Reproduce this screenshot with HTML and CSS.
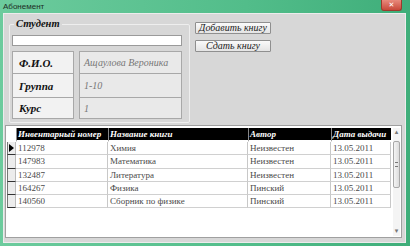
FILE: index.html
```html
<!DOCTYPE html>
<html lang="ru">
<head>
    <meta charset="UTF-8">
    <title>Абонемент</title>
    <link rel="stylesheet" href="styles.css">
</head>
<body>
    <div class="window">
        <div class="titlebar">
            <span class="title">Абонемент</span>
            <span class="close">&#x2715;</span>
        </div>
        <div class="panel">
            <div class="top">
                <fieldset class="group">
                    <legend>Студент</legend>
                    <div class="search"></div>
                    <div class="info">
                        <div class="key">Ф.И.О.</div>
                        <div class="val">Ащаулова Вероника</div>
                        <div class="key">Группа</div>
                        <div class="val">1-10</div>
                        <div class="key">Курс</div>
                        <div class="val">1</div>
                    </div>
                </fieldset>
                <div class="actions">
                    <button class="btn">Добавить книгу</button>
                    <button class="btn">Сдать книгу</button>
                </div>
            </div>

            <div class="table">
                <div class="grid">
                    <div class="corner"></div>
                    <div class="th">Инвентарный номер</div>
                    <div class="th">Название книги</div>
                    <div class="th">Автор</div>
                    <div class="th">Дата выдачи</div>

                    <div class="rh"><span class="arrow"></span></div>
                    <div class="td">112978</div>
                    <div class="td">Химия</div>
                    <div class="td">Неизвестен</div>
                    <div class="td">13.05.2011</div>

                    <div class="rh"></div>
                    <div class="td">147983</div>
                    <div class="td">Математика</div>
                    <div class="td">Неизвестен</div>
                    <div class="td">13.05.2011</div>

                    <div class="rh"></div>
                    <div class="td">132487</div>
                    <div class="td">Литература</div>
                    <div class="td">Неизвестен</div>
                    <div class="td">13.05.2011</div>

                    <div class="rh"></div>
                    <div class="td">164267</div>
                    <div class="td">Физика</div>
                    <div class="td">Пинский</div>
                    <div class="td">13.05.2011</div>

                    <div class="rh"></div>
                    <div class="td">140560</div>
                    <div class="td">Сборник по физике</div>
                    <div class="td">Пинский</div>
                    <div class="td">13.05.2011</div>
                </div>
                <div class="scrollbar">
                    <span class="sb-arrow">&#x25B4;</span>
                    <div class="thumb"><span class="grip"></span></div>
                    <span class="sb-arrow down">&#x25BE;</span>
                </div>
            </div>
        </div>
    </div>
</body>
</html>
```

FILE: styles.css
```css
body {
    margin: 0;
    padding: 0;
    font-family: "Liberation Serif", "DejaVu Serif", serif;
}

.window {
    width: 410px;
    height: 246px;
    display: flex;
    flex-direction: column;
    background: linear-gradient(to right, #6ccb9d, #52bd8a 60%, #3fae7a);
}

.titlebar {
    height: 12px;
    display: flex;
    justify-content: space-between;
    padding-left: 3px;
}

.title {
    font-family: "Liberation Sans", sans-serif;
    font-size: 8px;
    line-height: 13px;
    color: #1d2d25;
}

.close {
    width: 19px;
    height: 10px;
    margin-right: 8px;
    background: linear-gradient(#e88a7c, #c8493a);
    border: 1px solid #9b3a2e;
    border-top: none;
    border-radius: 0 0 3px 3px;
    color: #fff;
    font-family: "DejaVu Sans", sans-serif;
    font-size: 7px;
    font-weight: bold;
    line-height: 10px;
    text-align: center;
}

.panel {
    flex: 1;
    margin: 1px 4px 3px 3px;
    background: #d7d7d7;
    border: 1px solid #ececec;
    display: flex;
    flex-direction: column;
}

.top {
    display: flex;
    align-items: flex-start;
    margin-top: 4px;
}

.group {
    width: 181px;
    box-sizing: border-box;
    margin: 0 0 0 5px;
    padding: 0 2px 3px 2px;
    border: 1px solid #eeeeee;
    border-radius: 2px;
}

.group legend {
    padding: 0 2px;
    margin-left: 2px;
    font-family: "Liberation Serif", "DejaVu Serif", serif;
    font-size: 10.5px;
    line-height: 12px;
    font-weight: bold;
    font-style: italic;
    color: #111;
}

.search {
    height: 9px;
    width: 168px;
    margin-top: 5px;
    background: #fff;
    border: 1px solid #9a9a9a;
}

.info {
    display: grid;
    grid-template-columns: 62px 103px;
    grid-template-rows: 22px 24px 21px;
    column-gap: 5px;
    margin-top: 6px;
}

.key,
.val {
    box-sizing: border-box;
    display: flex;
    align-items: center;
    border: 1px solid #a8a8a8;
    margin-top: -1px;
}

.key {
    padding-left: 6px;
    background: #f2f2f2;
    font-size: 11px;
    font-weight: bold;
    font-style: italic;
    color: #111;
}

.val {
    padding-left: 4px;
    background: #e9e9e9;
    font-size: 10px;
    font-style: italic;
    color: #777;
}

.actions {
    display: flex;
    flex-direction: column;
    gap: 6px;
    margin-left: 5px;
    margin-top: 4px;
}

.btn {
    width: 76px;
    height: 12px;
    padding: 0;
    font-family: "Liberation Serif", "DejaVu Serif", serif;
    font-size: 10px;
    line-height: 10px;
    font-style: italic;
    color: #222;
    background: linear-gradient(#fafafa, #e4e4e4);
    border: 1px solid #8f8f8f;
    border-radius: 1px;
}

.table {
    margin: 2px 3px 0 1px;
    height: 113px;
    box-sizing: border-box;
    background: #fff;
    border: 1px solid #a0a0a0;
    display: flex;
    padding: 2px 1px 1px 1px;
}

.grid {
    display: grid;
    grid-template-columns: 9px 92px 140px 83px 60px;
    grid-template-rows: 14px;
    grid-auto-rows: 13.3px;
    align-content: start;
    margin-right: 2px;
}

.corner {
    background: #fff;
}

.th {
    background: #000;
    color: #fff;
    font-size: 9px;
    font-weight: bold;
    font-style: italic;
    line-height: 12px;
    padding-left: 1px;
    border-left: 1px solid #888;
    border-bottom: 2px solid #fff;
    white-space: nowrap;
    overflow: hidden;
}

.rh {
    box-sizing: border-box;
    background: #ececec;
    border-left: 1px solid #777;
    border-bottom: 1px solid #333;
    border-right: 1px solid #bbb;
    display: flex;
    align-items: center;
    justify-content: flex-end;
    padding-right: 1px;
}

.arrow {
    width: 0;
    height: 0;
    border-top: 4px solid transparent;
    border-bottom: 4px solid transparent;
    border-left: 5px solid #000;
}

.td {
    box-sizing: border-box;
    font-size: 9px;
    line-height: 12px;
    color: #4a4a4a;
    padding-left: 2px;
    border-right: 1px solid #c8c8c8;
    border-bottom: 1px solid #d0d0d0;
    white-space: nowrap;
}

.scrollbar {
    width: 9px;
    display: flex;
    flex-direction: column;
    align-items: center;
    background: #f4f4f4;
}

.sb-arrow {
    font-family: "DejaVu Sans", sans-serif;
    font-size: 7px;
    line-height: 9px;
    color: #777;
}

.sb-arrow.down {
    margin-top: auto;
}

.thumb {
    width: 7px;
    height: 47px;
    margin-top: 4px;
    box-sizing: border-box;
    background: linear-gradient(to right, #f4f4f4, #dcdcdc);
    border: 1px solid #a8a8a8;
    border-radius: 2px;
    display: flex;
    align-items: center;
    justify-content: center;
}

.grip {
    width: 3px;
    height: 3px;
    border-top: 1px solid #777;
    border-bottom: 1px solid #777;
}
```
